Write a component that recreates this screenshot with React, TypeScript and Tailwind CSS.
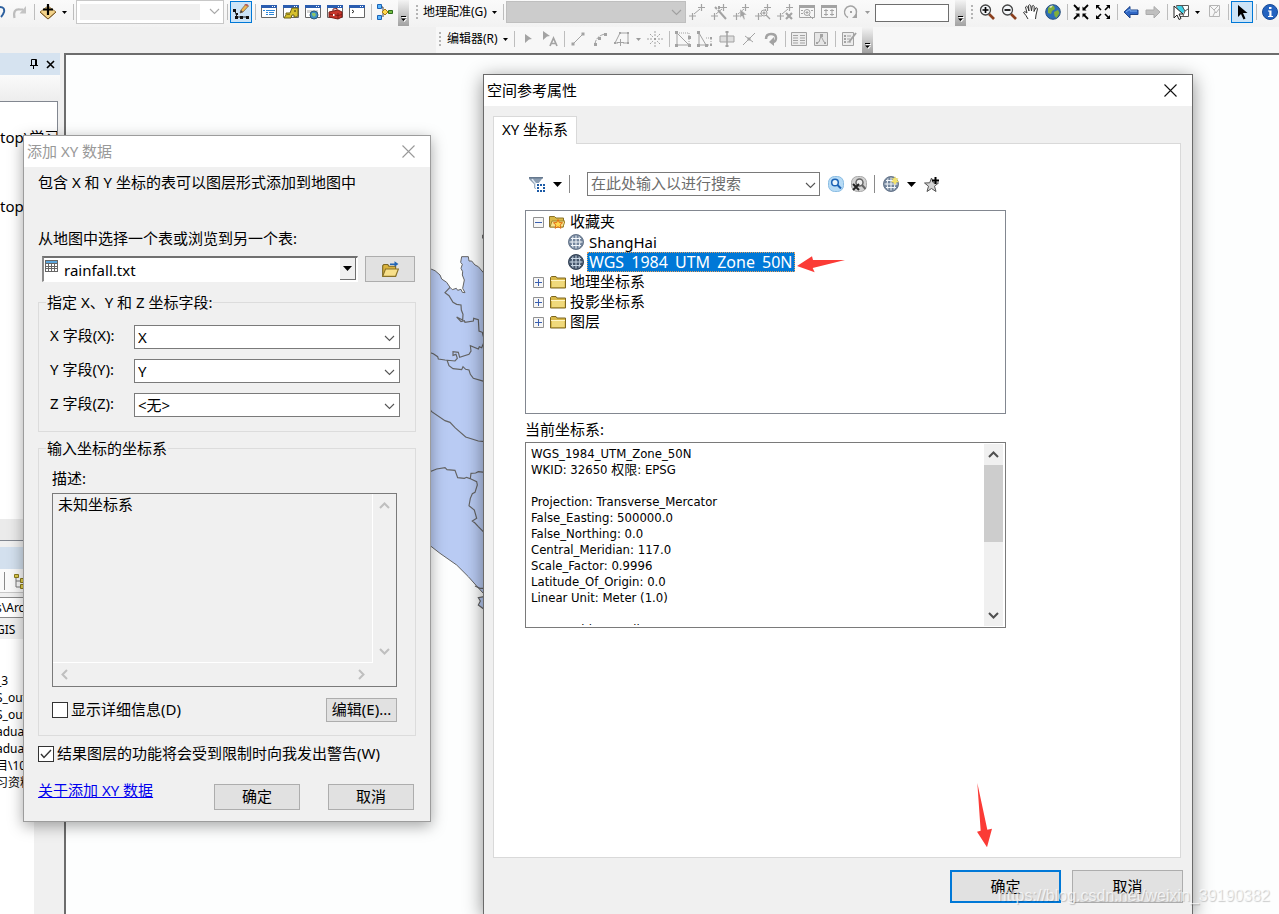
import React from "react";
import type { ReactNode } from "react";

/* ---------- small building blocks ---------- */

function Svg({ children, size = 16 }: { children: ReactNode; size?: number }) {
  return (
    <svg width={size} height={size} viewBox="0 0 16 16" fill="none" className="block shrink-0" aria-hidden="true">
      {children}
    </svg>
  );
}

function Tool({ label, active, children }: { label: string; active?: boolean; children: ReactNode }) {
  return (
    <button
      type="button"
      aria-label={label}
      className={
        active
          ? "mt-px flex h-[22px] w-[22px] shrink-0 items-center justify-center border border-[#0078d7] bg-[#cce4f7]"
          : "flex h-6 w-[22px] shrink-0 items-center justify-center"
      }
    >
      {children}
    </button>
  );
}

function Caret({ label, dim }: { label: string; dim?: boolean }) {
  return (
    <button type="button" aria-label={label} className="flex h-6 w-[11px] shrink-0 items-center justify-center">
      <svg width="5" height="3" viewBox="0 0 5 3" aria-hidden="true">
        <path d="M0 0h5L2.500 3z" fill={dim ? "#9a9a9a" : "#000"} />
      </svg>
    </button>
  );
}

function Sep() {
  return (
    <span className="flex h-6 w-1.5 shrink-0 items-center justify-center">
      <span className="h-4 w-px bg-[#bdbdbd]" />
    </span>
  );
}

function Grip() {
  return (
    <span className="flex h-6 w-2 shrink-0 items-center justify-center">
      <svg width="2" height="14" viewBox="0 0 2 14" fill="#b4b4b4" aria-hidden="true">
        <path d="M0 0h2v2H0zM0 4h2v2H0zM0 8h2v2H0zM0 12h2v2H0z" />
      </svg>
    </span>
  );
}

function Overflow() {
  return (
    <button
      type="button"
      aria-label="工具条选项"
      className="ml-0.5 flex h-[26px] w-[11px] shrink-0 items-end justify-center bg-linear-to-b from-[#f4f4f4] to-[#a2a2a2] pb-1"
    >
      <svg width="6" height="6" viewBox="0 0 6 6" aria-hidden="true">
        <path d="M1 1h5v1H1zM1 3h5L3.500 6z" fill="#fff" />
        <path d="M0 0h5v1H0zM0 2.500h5L2.500 5z" fill="#000" />
      </svg>
    </button>
  );
}

function Chevron({ color = "#555" }: { color?: string }) {
  return (
    <svg width="11" height="7" viewBox="0 0 11 7" fill="none" aria-hidden="true">
      <path d="M1 1l4.500 4.500L10 1" stroke={color} strokeWidth="1.100" />
    </svg>
  );
}

function ScrollArrow({ turn, color }: { turn: string; color: string }) {
  return (
    <svg width="11" height="11" viewBox="0 0 11 11" fill="none" className={turn} aria-hidden="true">
      <path d="M1 8l4.500-4.500L10 8" stroke={color} strokeWidth="2" />
    </svg>
  );
}

/* ---------- toolbar icons ---------- */

const G = "#a3a3a3";

const Redo = () => (
  <Svg>
    <path d="M2.500 14Q.5 4.500 8 5.500h3" stroke="#bdbdbd" strokeWidth="2.200" />
    <path d="M14 2v7.500H7.500z" fill="#c4c4c4" />
  </Svg>
);
const Undo = () => (
  <Svg>
    <path d="M5 3h5q5 0 4 5-1 3-3 5" stroke="#2c5f9e" strokeWidth="2" />
  </Svg>
);
const AddData = () => (
  <Svg>
    <path d="M8 2l8 6-8 7-8-7z" fill="#f3d38a" stroke="#9c7a3c" />
    <path d="M0 8l8 7 8-7" stroke="#7a5a2a" />
    <path d="M8 0v11M3 5.500h10" stroke="#000" strokeWidth="2.200" />
  </Svg>
);
const EditTool = () => (
  <Svg>
    <path d="M2 7l2 6h9" stroke="#222" />
    <path d="M0 5h3v3H0zM2 12h3v3H2zM7 12h3v3H7zM13 12h3v3h-3zM3 9h2v2H3z" fill="#111" />
    <path d="M7 9l1-3 5-6 2.500 2L10 8z" fill="#f0b64a" stroke="#8d7a64" />
    <path d="M7 9l1-3 2 2z" fill="#444" />
    <path d="M12 0l3 2" stroke="#b45f5f" strokeWidth="2" />
  </Svg>
);
function Win({ children }: { children?: ReactNode }) {
  return (
    <Svg>
      <path d="M.5 1.500h15v12H.5z" fill="#fff" stroke="#666" />
      <path d="M0 1h16v3H0z" fill="#2a5db0" />
      <path d="M11 2h1v1h-1zM13 2h1v1h-1z" fill="#fff" />
      {children}
    </Svg>
  );
}
const ContentsWin = () => (
  <Win>
    <path d="M2 6h2v1H2zM5 6h9v1H5zM5 8h2v1H5zM8 8h5v1H8zM5 10h2v1H5zM8 10h5v1H8z" fill="#2d86d8" />
  </Win>
);
const CatalogWin = () => (
  <Win>
    <path d="M9 4h6v8l-2 1h-2v-2H9l-1 3H1l2-3V9h4z" fill="#d6c02b" stroke="#6f6412" />
    <path d="M11 6h2v2h-2zM4 10h3v1H4z" fill="#8a7a18" />
  </Win>
);
const SearchWin = () => (
  <Win>
    <path d="M2 6h11v3H2z" fill="#d5d5d5" />
    <circle cx="9" cy="11" r="4" fill="#3b8fc6" stroke="#2c5c7a" />
    <path d="M7 9l3 0 1 2-2 2-2-2z" fill="#8dc56b" />
  </Win>
);
const ToolboxWin = () => (
  <Win>
    <path d="M2 8l9-2 4 2v5l-4 2-9-2z" fill="#c9362c" stroke="#7e1c16" />
    <path d="M6 7V5l4-.5V6M2 10l9 1.500 4-1M11 9v6" stroke="#7e1c16" />
    <path d="M6 10h1.500v2H6z" fill="#fff" />
  </Win>
);
const PythonWin = () => (
  <Win>
    <path d="M3 6l2 1.500L3 9" stroke="#222" />
  </Win>
);
const Model = () => (
  <Svg>
    <path d="M3 3h3v10M6 8h8" stroke="#444" />
    <path d="M.5.5h4v4h-4zM.5 11.500h4v4h-4z" fill="#5cb8ff" stroke="#1b62b5" />
    <path d="M8 5l3 3-3 3-3-3z" fill="#ffd84e" stroke="#a57a12" />
    <path d="M11.500 6.500h4v3h-4z" fill="#76c043" stroke="#2f6d1c" />
  </Svg>
);

const Link = ({ extra }: { extra?: ReactNode }) => (
  <Svg>
    <path d="M0 12h7M3.500 9v7M9 3.500h7M12.500 0v7" stroke={G} strokeWidth="1.200" />
    <path d="M5 10l6-5" stroke={G} />
    {extra}
  </Svg>
);
const WandMark = <path d="M7 6l8 9M8 2v3M4 3l2 2" stroke={G} strokeWidth="2" />;
const ArrowMark = <path d="M7 5v9l2-2 2 4 1-1-1-4h3z" fill={G} stroke="#f5f5f5" strokeWidth=".5" />;
const LensMark = (
  <>
    <circle cx="9" cy="9" r="3" fill="#f5f5f5" stroke={G} />
    <path d="M11 11l4 4M7.500 9h3M9 7.500v3" stroke={G} strokeWidth="1.300" />
  </>
);
const CrossMark = <path d="M9 9l6 6M15 9l-6 6" stroke={G} strokeWidth="2.200" />;

const FrameZoom = () => (
  <Svg>
    <path d="M.5 1.500h15v12H.5z" stroke={G} />
    <path d="M0 1h16v3H0zM2 6h2v1H2zM2 9h2v1H2zM12 6h2v1h-2z" fill={G} />
    <circle cx="8" cy="8.500" r="3" stroke={G} />
    <path d="M10 11l4 4M6.500 8.500h3M8 7v3" stroke={G} />
  </Svg>
);
const FrameTable = () => (
  <Svg>
    <path d="M.5 1.500h15v12H.5z" stroke={G} />
    <path d="M0 1h16v3H0z" fill={G} />
    <path d="M3 6.500h4M9 6.500h4M3 10.500h4M9 10.500h4M5 5v7M11 5v7" stroke={G} />
  </Svg>
);
const Rotate = () => (
  <Svg>
    <path d="M5 13.500A6 6 0 1 1 12 12" stroke={G} strokeWidth="1.500" />
    <path d="M9 14l5 0V9z" fill={G} />
    <path d="M7 7h2v2H7z" fill={G} />
  </Svg>
);

const ZoomLens = ({ plus }: { plus?: boolean }) => (
  <Svg>
    <path d="M10 10l5 5" stroke="#8a3f1d" strokeWidth="2.600" />
    <circle cx="6.500" cy="6" r="5" fill="#f4f7fa" stroke="#444" strokeWidth="1.300" />
    <path d={plus ? "M3.500 6h6M6.500 3v6" : "M3.500 6h6"} stroke="#000" strokeWidth="1.700" />
  </Svg>
);
const Hand = () => (
  <Svg>
    <path
      d="M5 15Q3 11 .5 8.500q1-2 3.500.5L2.500 3q1.200-1.500 2.200 0L6 7 5.500 1.500q1.200-1.500 2.200 0L8.500 7l.7-5q1.300-1.300 2 .2L11 7.500 12.700 4q1.500-.8 1.800.8L13 11l-.5 4"
      fill="#fff"
      stroke="#333"
    />
  </Svg>
);
const Earth = () => (
  <Svg>
    <circle cx="8" cy="8" r="7.300" fill="#2d6fb8" stroke="#28507c" />
    <path d="M3 4q3-3 6-2l1 3-3 2-1 3-3-1zM9 8l4-2 1.500 3-3 5-2-2z" fill="#7fae3c" />
    <path d="M4 3q2-2 4-1.500L6 4z" fill="#dfe9c4" />
  </Svg>
);
const FixedIn = () => (
  <Svg>
    <path d="M1 1l4 4M15 1l-4 4M1 15l4-4M15 15l-4-4" stroke="#000" strokeWidth="1.800" />
    <path d="M6.500 2.500v4h-4zM9.500 2.500v4h4zM6.500 13.500v-4h-4zM9.500 13.500v-4h4z" fill="#000" />
  </Svg>
);
const FixedOut = () => (
  <Svg>
    <path d="M2 2l4 4M14 2l-4 4M2 14l4-4M14 14l-4-4" stroke="#000" strokeWidth="1.600" />
    <path d="M1 1h4L1 5zM15 1h-4l4 4zM1 15h4l-4-4zM15 15h-4l4-4z" fill="#000" />
  </Svg>
);
const Back = () => (
  <Svg>
    <path d="M1 8l6-5.500V6h8v4.500H7V14z" fill="#2f66c4" stroke="#1f4488" />
    <path d="M3 8l4-3v2h7" stroke="#7fb0f0" />
  </Svg>
);
const Forward = () => (
  <Svg>
    <path d="M15 8L9 2.500V6H1v4.500h8V14z" fill="#c0c0c0" stroke="#acacac" />
  </Svg>
);
const SelectFeatures = () => (
  <Svg>
    <path d="M3.500 1.500h12v11h-9z" fill="#fff" stroke="#555" />
    <path d="M4 2h6l2 5-3 3-4-4z" fill="#3fd0e6" />
    <path d="M9 2l3 5 3-2M12 7l-2 5" stroke="#555" />
    <path d="M1 2v12l3-3 2 4.500 2-1L6 10h4z" fill="#fff" stroke="#222" />
  </Svg>
);
const ClearSelected = () => (
  <Svg>
    <path d="M3.500 1.500h10v11h-10z" stroke="#b5b5b5" />
    <path d="M4 2l4 4 2 3 3-4M8 6l4-4M9 8l-2 4" stroke="#b5b5b5" />
  </Svg>
);
const Pointer = () => (
  <Svg>
    <path d="M4 1v12l3-3 2.500 5.500 2-1L9 9h4.500z" fill="#000" />
  </Svg>
);
const Info = () => (
  <Svg>
    <circle cx="8" cy="8" r="7.500" fill="#2363c0" stroke="#174a96" />
    <path d="M7 3h2.500v2H7zM6 6.500h3.500V12H11v1H6v-1h1.300V7.500H6z" fill="#fff" />
  </Svg>
);

const EditIcons: Record<string, ReactNode> = {
  edit: <path d="M5 3l7 5-3 .5L5 12z" fill={G} />,
  note: (
    <>
      <path d="M1 0l7 5-3 .5L1 9z" fill={G} />
      <path d="M8 15l3.500-8L15 15M9.500 12.500h4" stroke={G} strokeWidth="1.700" />
    </>
  ),
  line: (
    <>
      <path d="M3 13L13 3" stroke={G} />
      <path d="M1.500 11.500h3v3h-3zM11.500 1.500h3v3h-3z" fill={G} />
    </>
  ),
  arc: (
    <>
      <path d="M3 13q1-8 10-10" stroke={G} strokeDasharray="4 1" />
      <path d="M2 12h3v3H2zM6 6h3v3H6zM12 2h3v3h-3z" fill={G} />
    </>
  ),
  trace: (
    <>
      <path d="M6 2h8v10H9M6 2L1 12h3M6.500 8v7M3 11.500h7" stroke={G} />
      <path d="M5 1h2v2H5zM13 1h2v2h-2zM13 11h2v2h-2zM0 11h2v2H0z" fill={G} />
    </>
  ),
  point: (
    <>
      <path d="M8 0v5M8 11v5M0 8h5M11 8h5M3 3l3 3M13 3l-3 3M3 13l3-3M13 13l-3-3" stroke={G} strokeDasharray="2 1" />
      <path d="M7 7h2v2H7z" fill={G} />
    </>
  ),
  vertices: (
    <>
      <path d="M2 2v12h12L2 2" stroke={G} />
      <path d="M2 2h12v12" stroke={G} strokeDasharray="1 1" />
      <path d="M0 0h3v3H0zM0 13h3v3H0zM13 13h3v3h-3zM13 5h3v3h-3z" fill={G} />
    </>
  ),
  reshape: (
    <>
      <path d="M2 2v12h7L2 2" stroke={G} />
      <path d="M9 7h5v7H9" stroke={G} strokeDasharray="1 1" />
      <path d="M0 0h3v3H0zM0 13h3v3H0zM8 13h3v3H8zM13 6h2v2h-2zM13 13h2v2h-2z" fill={G} />
    </>
  ),
  cut: (
    <>
      <path d="M1 5h14v6H1z" fill="#dedede" stroke={G} />
      <path d="M8 1v14" stroke={G} strokeWidth="1.500" />
      <path d="M6.500 0h3v2h-3zM6.500 14h3v2h-3z" fill={G} />
    </>
  ),
  split: (
    <>
      <path d="M2 14L14 2M4 5l8 6" stroke={G} />
      <path d="M6.500 6.500h3v3h-3z" fill={G} />
    </>
  ),
  spin: (
    <>
      <path d="M3 8q0-5 5-5t5 4-4 4" stroke={G} strokeWidth="2.500" />
      <path d="M11 6v9l-5-4z" fill={G} />
    </>
  ),
  attrs: (
    <>
      <path d="M.5 1.500h15v13H.5z" fill="#ededed" stroke={G} />
      <path d="M2 4.500h5M9 4.500h5M2 7h5M9 7h5M2 9.500h5M9 9.500h5M2 12h5M9 12h5" stroke={G} />
    </>
  ),
  sketch: (
    <>
      <path d="M1.500 1.500h13v13h-13z" fill="#e6e6e6" stroke={G} />
      <path d="M3 12l3-1 2-6 3 6 2 1" stroke={G} />
      <path d="M7 3h3v3H7zM3 11h2v2H3zM11 11h2v2h-2z" fill={G} />
    </>
  ),
  create: (
    <>
      <path d="M1.500 1.500h11v13h-11z" fill="#ededed" stroke={G} />
      <path d="M3 4h2v2H3zM3 7h2v2H3zM3 10h2v2H3zM6 4.500h4v1H6zM6 7.500h3v1H6zM6 10.500h4v1H6z" fill={G} />
      <path d="M8 11l7-9" stroke={G} strokeWidth="2" />
    </>
  ),
};

function EditButton({ name, label }: { name: string; label: string }) {
  return (
    <Tool label={label}>
      <Svg>{EditIcons[name]}</Svg>
    </Tool>
  );
}

/* ---------- dialog icons ---------- */

const Globe = ({ dark, spark }: { dark?: boolean; spark?: boolean }) => (
  <Svg>
    <circle cx="8" cy="8" r="7.500" fill={dark ? "#43546a" : "#73859c"} stroke={dark ? "#344356" : "#66768b"} />
    <path
      d="M8 1.500v13M5 2.500Q3 8 5 13.500M11 2.500q2 5.500 0 11M1.500 8h13M3 4.500h10M3 11.500h10"
      stroke={dark ? "#c9d6e4" : "#f3f7fb"}
    />
    {spark && <path d="M12 0l1 2.500 2.500-.5L14 4l2 2-2.500.5L12 9l-1.500-2.500L8 6l2-2-1.500-2 2.500.5z" fill="#f4e36c" />}
  </Svg>
);
const Folder = () => (
  <Svg>
    <path d="M.5 14V3.500l1-1H6l1 1.500h8.500v10z" fill="#d8b848" stroke="#7d6722" />
    <path d="M2 7h12.500v6H2z" fill="#f0d97c" />
    <path d="M1 6.500h14" stroke="#fff5c4" />
  </Svg>
);
const FavFolder = () => (
  <Svg>
    <path d="M.5 13V2.500h5L7 4h7.500v9z" fill="#d8b848" stroke="#8a7228" />
    <path d="M3 7h13l-2 6H1z" fill="#f6e28e" stroke="#a2842c" />
    <path d="M9 5.500l1.300 3 3.200.3-2.400 2.200.8 3.300L9 12.700l-2.900 1.600.8-3.300-2.400-2.200 3.200-.3z" fill="#ffd84e" stroke="#e06c14" />
  </Svg>
);
const OpenFolder = () => (
  <Svg size={18}>
    <path d="M1.500 14V5l1-1H6l1 1.500h6V14z" fill="#d9b23c" stroke="#7d6722" />
    <path d="M4 8h11.500L13 14.500H1.500z" fill="#f8e08a" stroke="#8a7228" />
    <path d="M8 4.500V3h4V1l3.500 2.500L12 6V4.500z" fill="#2165b5" />
  </Svg>
);
const TableIcon = () => (
  <svg width="13" height="12" viewBox="0 0 13 12" aria-hidden="true">
    <path d="M0 0h13v12H0z" fill="#666" />
    <path d="M1 1h11v2H1z" fill="#5aa5dc" />
    <path d="M1 4h2v2H1zM4 4h2v2H4zM7 4h2v2H7zM10 4h2v2h-2zM1 7h2v1H1zM4 7h2v1H4zM7 7h2v1H7zM10 7h2v1h-2zM1 9h2v2H1zM4 9h2v2H4zM7 9h2v2H7zM10 9h2v2h-2z" fill="#fff" />
  </svg>
);
const Funnel = () => (
  <Svg>
    <path d="M0 1.500h14L9 8v6l-4-2V8L0 3z" fill="#8b9db2" />
    <path d="M3 3l3.500 4.500V12" stroke="#dce6ef" strokeWidth="1.500" />
    <path d="M0 1h14v1.500H0z" fill="#65788e" />
    <path d="M7 7h9v9H7z" fill="#fff" />
    <path
      d="M8 8h2v2H8zM11 8h2v2h-2zM14 8h2v2h-2zM8 11h2v2H8zM14 11h2v2h-2zM8 14h2v2H8zM11 14h2v2h-2zM14 14h2v2h-2z"
      fill="#1c5aa6"
    />
  </Svg>
);
const FindIcon = () => (
  <Svg>
    <rect x=".5" y=".5" width="15" height="15" rx="6" fill="#b7dbf5" stroke="#8bbde3" />
    <circle cx="7" cy="6.500" r="3.300" fill="#e9f5fd" stroke="#1b62b5" strokeWidth="1.500" />
    <path d="M9.500 9l3.500 3.500" stroke="#1b62b5" strokeWidth="2" />
  </Svg>
);
const ClearFind = () => (
  <Svg>
    <rect x=".5" y=".5" width="15" height="15" rx="6" fill="#d2d2d2" stroke="#a8a8a8" />
    <circle cx="8.500" cy="6.500" r="3.500" fill="#eee" stroke="#666" strokeWidth="1.500" />
    <path d="M11 9l3.500 4" stroke="#666" strokeWidth="2" />
    <path d="M2 8l6 6M8 8l-6 6" stroke="#222" strokeWidth="2" />
  </Svg>
);
const StarAdd = () => (
  <Svg>
    <path d="M7.500 2l1.800 4.800 5.200.2-4 3.200 1.500 5.300-4.500-3-4.500 3 1.500-5.300-4-3.200 5.200-.2z" fill="#d4d4d4" stroke="#555" />
    <path d="M11.500 1v7M8 4.500h7" stroke="#000" strokeWidth="2" />
  </Svg>
);
const Close = ({ color }: { color: string }) => (
  <svg width="13" height="13" viewBox="0 0 13 13" fill="none" aria-hidden="true">
    <path d="M.5.5l12 12M12.500.5l-12 12" stroke={color} strokeWidth="1.100" />
  </svg>
);

/* ---------- application window ---------- */

function Toolbars() {
  return (
    <header className="shrink-0 bg-[#f0f0f0]">
      <div className="flex h-[27px] items-start overflow-hidden bg-linear-to-b from-[#fafafa] to-[#f2f2f2]">
        <div className="-ml-[13px] flex shrink-0 items-start">
          <Tool label="撤消"><Undo /></Tool>
          <Tool label="恢复"><Redo /></Tool>
          <Sep />
          <Tool label="添加数据"><AddData /></Tool>
          <Caret label="添加数据选项" />
          <Sep />
          <div className="relative h-6 w-[148px]">
            <select aria-label="地图比例" disabled className="h-full w-full appearance-none border border-[#c8c8c8] bg-white" />
            <span className="pointer-events-none absolute inset-y-1 left-1 right-6 bg-[#f0f0f0]" />
            <span className="pointer-events-none absolute right-1 top-2"><Chevron color="#a8a8a8" /></span>
          </div>
          <Sep />
          <Tool label="编辑器工具条" active><EditTool /></Tool>
          <Sep />
          <Tool label="内容列表"><ContentsWin /></Tool>
          <Tool label="目录"><CatalogWin /></Tool>
          <Tool label="搜索"><SearchWin /></Tool>
          <Tool label="工具箱"><ToolboxWin /></Tool>
          <Tool label="Python"><PythonWin /></Tool>
          <Sep />
          <Tool label="模型构建器"><Model /></Tool>
          <Overflow />
        </div>

        <div className="ml-1 flex shrink-0 items-start">
          <Grip />
          <button type="button" className="h-6 w-[68px] whitespace-nowrap pl-0.5 text-left text-[12px]">地理配准(G)</button>
          <Caret label="地理配准菜单" />
          <Sep />
          <div className="relative mt-px h-[22px] w-[180px]">
            <select aria-label="图层" disabled className="h-full w-full appearance-none border border-[#bfbfbf] bg-[#cccccc]" />
            <span className="pointer-events-none absolute right-1 top-2"><Chevron color="#a0a0a0" /></span>
          </div>
          <Tool label="添加控制点"><Link /></Tool>
          <Tool label="自动配准"><Link extra={WandMark} /></Tool>
          <Tool label="选择连接"><Link extra={ArrowMark} /></Tool>
          <Tool label="缩放至连接"><Link extra={LensMark} /></Tool>
          <Tool label="删除连接"><Link extra={CrossMark} /></Tool>
          <Tool label="查看器"><FrameZoom /></Tool>
          <Tool label="连接表"><FrameTable /></Tool>
          <Tool label="旋转"><Rotate /></Tool>
          <Caret label="旋转选项" dim />
          <input aria-label="角度" className="ml-0.5 mr-1 mt-1 h-[18px] w-[74px] border border-[#6e6e6e] bg-white px-1 text-[12px]" />
          <Overflow />
        </div>

        <div className="ml-0.5 flex shrink-0 items-start">
          <Grip />
          <Tool label="放大"><ZoomLens plus /></Tool>
          <Tool label="缩小"><ZoomLens /></Tool>
          <Tool label="平移"><Hand /></Tool>
          <Tool label="全图"><Earth /></Tool>
          <Sep />
          <Tool label="固定比例放大"><FixedIn /></Tool>
          <Tool label="固定比例缩小"><FixedOut /></Tool>
          <Sep />
          <Tool label="返回"><Back /></Tool>
          <Tool label="前进"><Forward /></Tool>
          <Sep />
          <Tool label="选择要素"><SelectFeatures /></Tool>
          <Caret label="选择选项" />
          <Tool label="清除所选"><ClearSelected /></Tool>
          <Sep />
          <Tool label="选择元素" active><Pointer /></Tool>
          <Sep />
          <Tool label="识别"><Info /></Tool>
        </div>
      </div>

      <div className="flex h-[26px] overflow-hidden pl-[436px]">
        <div className="flex flex-1 items-start bg-[#f7f7f7]">
          <Grip />
          <button type="button" className="h-6 w-14 whitespace-nowrap pl-[3px] text-left text-[12px]">编辑器(R)</button>
          <Caret label="编辑器菜单" />
          <Sep />
          <EditButton name="edit" label="编辑工具" />
          <EditButton name="note" label="编辑注记工具" />
          <Sep />
          <EditButton name="line" label="直线段" />
          <EditButton name="arc" label="弧段" />
          <EditButton name="trace" label="追踪" />
          <Caret label="追踪选项" dim />
          <EditButton name="point" label="点" />
          <Sep />
          <EditButton name="vertices" label="编辑折点" />
          <EditButton name="reshape" label="整形要素" />
          <EditButton name="cut" label="裁剪面" />
          <EditButton name="split" label="分割" />
          <EditButton name="spin" label="旋转工具" />
          <Sep />
          <EditButton name="attrs" label="属性" />
          <EditButton name="sketch" label="草图属性" />
          <Sep />
          <EditButton name="create" label="创建要素" />
          <Overflow />
        </div>
      </div>
    </header>
  );
}

const FILES = ["_3", "S_out", "S_out", "adual", "adual", "目\\10", "习资料"];

function SidePanels() {
  return (
    <aside className="flex w-16 shrink-0 flex-col overflow-hidden whitespace-nowrap bg-[#f0f0f0]">
      <div className="flex h-[22px] w-[60px] shrink-0 items-center justify-end gap-2 bg-[#d6e3f0] pr-[5px]">
        <button type="button" aria-label="自动隐藏">
          <svg width="8" height="10" viewBox="0 0 8 10" fill="none" aria-hidden="true">
            <path d="M1.500.5h5V6M1.500.5V6M5.500 1v5M0 6.500h8M3.500 7v3" stroke="#000" />
          </svg>
        </button>
        <button type="button" aria-label="关闭面板">
          <svg width="9" height="9" viewBox="0 0 9 9" fill="none" aria-hidden="true">
            <path d="M1 1l7 7M8 1l-7 7" stroke="#000" strokeWidth="1.600" />
          </svg>
        </button>
      </div>
      <div className="h-[26px] w-[60px] shrink-0 bg-linear-to-b from-[#fafafa] to-[#ededed]" />
      <div className="h-[418px] w-[58px] shrink-0 overflow-hidden border-r border-t border-[#828790] bg-white pt-[25px] text-[15px] leading-5">
        <div>top\学习</div>
        <div className="mt-[49px]">top\</div>
      </div>
      <div className="h-[21px] shrink-0 bg-[#ebebeb]" />
      <div className="h-[7px] shrink-0 border-t border-[#828790]" />
      <div className="h-[22px] shrink-0 bg-[#d3e0ee]" />
      <div className="flex h-[24px] shrink-0 items-center border-b border-[#c8c8c8] bg-[#fafafa] pl-1">
        <span className="h-[18px] w-px bg-[#8a8a8a]" />
        <span className="ml-2">
          <Svg>
            <path d="M3 4v10h5M3 8h5" stroke="#777" />
            <path d="M1.500 1.500h4v3h-4zM7.500 5.500h4v4h-4zM7.500 11.500h4v4h-4z" fill="#e2cf4d" stroke="#8a7a1e" />
          </Svg>
        </span>
      </div>
      <input
        aria-label="位置"
        defaultValue="s\ArcGIS"
        className="-ml-1 mt-1 h-[21px] w-[68px] shrink-0 border-y border-[#8a8a8a] bg-white pb-px text-[12px]"
      />
      <div className="-ml-1 mt-[3px] w-[21px] shrink-0 text-[12px] leading-[18px]">GIS</div>
      <ul className="w-[34px] flex-1 overflow-hidden bg-white pt-[33px] text-[12px] leading-[17px]">
        {FILES.map((f, i) => (
          <li key={i} className="-ml-1">{f}</li>
        ))}
      </ul>
    </aside>
  );
}

function MapView() {
  return (
    <main className="relative flex-1 overflow-hidden border-l-2 border-t-2 border-[#6d6d6d] bg-[#fdfefe]">
      <svg className="absolute left-[359px] top-[170px]" width="70" height="400" viewBox="0 0 210 1200" fill="none" aria-hidden="true">
        <path
          d="M0 122L20 133 30 137 45 150 50 162 65 172 75 187 82 194 94 190 98 196 108 193 112 202 120 203 113 190 118 165 112 150 113 140 108 130 112 118 107 112 110 95 130 95 132 108 140 108 150 120 160 125 177 145 210 170V1130L175 1105 155 1083 130 1055 95 1020 45 985 0 950z"
          fill="#b9cbf3"
          stroke="#646464"
          strokeWidth="3"
        />
        <path d="M177 1115L160 1118 166 1128 160 1140 177 1153 190 1153V1115z" fill="#b9cbf3" />
        <path
          d="M75 187L60 203 72 212 84 232 95 238 108 240 109 255 114 268 113 285 95 276 108 290 118 287 120 292 145 288 146 280 160 284 162 318 172 322 175 335M0 378L25 386 38 395 40 402 60 405 90 408 97 400 93 388 84 391 84 380 100 382 104 397 132 388 138 378 136 362 160 372 163 365 170 368 177 352M66 405L72 422 84 431 110 434 114 425 122 433 132 435 136 448 145 460 177 469M0 535L20 560 60 587 75 592 90 608 122 636 160 648 180 650M0 746L35 732 60 728 66 734 90 736 98 758 118 760 125 757 138 762 155 770 157 780 150 802 142 806 136 820 132 842 148 855 155 880 142 888 150 894 160 905 177 922M136 760L138 745 152 744 160 740 180 742M150 1083L165 1090 177 1090M177 1115L160 1118 166 1128 160 1140 177 1153M180 31h-7v8h7"
          stroke="#646464"
          strokeWidth="3.500"
        />
      </svg>
    </main>
  );
}

/* ---------- "添加 XY 数据" dialog ---------- */

const PUSH = "border border-[#adadad] bg-[#e1e1e1] text-center";

function FieldRow({ id, label, value }: { id: string; label: string; value: string }) {
  return (
    <div className="flex h-6 items-center">
      <label htmlFor={id} className="w-[84px] shrink-0 pb-1">{label}</label>
      <div className="relative h-6 flex-1">
        <select id={id} className="h-full w-full appearance-none border border-[#7a7a7a] bg-white pl-[3px] pr-6">
          <option>{value}</option>
        </select>
        <span className="pointer-events-none absolute right-[5px] top-2.5"><Chevron /></span>
      </div>
    </div>
  );
}

function AddXYDialog() {
  return (
    <section
      role="dialog"
      aria-labelledby="xy-title"
      className="absolute left-[23px] top-[135px] w-[408px] border border-[#9c9c9c] bg-[#f0f0f0] text-[15px] leading-5 shadow-[0_4px_14px_rgba(0,0,0,0.35)]"
    >
      <div className="flex h-[31px] items-center justify-between bg-white pl-[3px] pr-[15px] text-[#999]">
        <h2 id="xy-title" className="pb-0.5">添加 XY 数据</h2>
        <button type="button" aria-label="关闭"><Close color="#999" /></button>
      </div>

      <div className="px-3.5 pb-[11px] pt-[5px]">
        <p>包含 X 和 Y 坐标的表可以图层形式添加到地图中</p>
        <label htmlFor="table-source" className="mt-9 block">从地图中选择一个表或浏览到另一个表:</label>

        <div className="mt-2 flex items-center justify-between pl-1 pr-px">
          <div className="relative h-[26px] w-[316px]">
            <select
              id="table-source"
              className="h-full w-full appearance-none border-b border-l-2 border-r border-t-2 border-b-white border-l-[#8a8a8a] border-r-white border-t-[#707070] bg-white pl-5 pr-5"
            >
              <option>rainfall.txt</option>
            </select>
            <span className="pointer-events-none absolute left-[3px] top-1"><TableIcon /></span>
            <span className="pointer-events-none absolute bottom-0.5 right-0.5 top-0.5 flex w-4 items-center justify-center border-b border-r border-[#707070] bg-[#f0f0f0]">
              <svg width="9" height="5" viewBox="0 0 9 5" aria-hidden="true"><path d="M0 0h9L4.500 5z" /></svg>
            </span>
          </div>
          <button type="button" aria-label="浏览" className={`${PUSH} flex h-[26px] w-[50px] items-center justify-center`}>
            <OpenFolder />
          </button>
        </div>

        <fieldset className="mt-2.5 border border-[#dcdcdc] px-[11px] pb-3.5 pr-[15px]">
          <legend className="-ml-1 px-px">指定 X、Y 和 Z 坐标字段:</legend>
          <div className="mt-[13px] flex flex-col gap-2.5">
            <FieldRow id="fx" label="X 字段(X):" value="X" />
            <FieldRow id="fy" label="Y 字段(Y):" value="Y" />
            <FieldRow id="fz" label="Z 字段(Z):" value="<无>" />
          </div>
        </fieldset>

        <fieldset className="mt-1.5 border border-[#dcdcdc] px-[13px] pb-[13px] pr-[18px]">
          <legend className="-ml-1.5 px-px">输入坐标的坐标系</legend>
          <label htmlFor="desc" className="mt-2.5 block">描述:</label>
          <div className="mt-[5px] grid h-[194px] grid-cols-[1fr_23px] grid-rows-[1fr_23px] border border-[#7a7a7a]">
            <textarea
              id="desc"
              readOnly
              defaultValue="未知坐标系"
              className="resize-none overflow-hidden border-b border-r border-white bg-transparent px-[5px]"
            />
            <div className="flex flex-col items-center justify-between py-1.5">
              <button type="button" aria-label="向上滚动"><ScrollArrow turn="" color="#bfbfbf" /></button>
              <button type="button" aria-label="向下滚动"><ScrollArrow turn="rotate-180" color="#bfbfbf" /></button>
            </div>
            <div className="flex items-center justify-between px-1.5">
              <button type="button" aria-label="向左滚动"><ScrollArrow turn="-rotate-90" color="#bfbfbf" /></button>
              <button type="button" aria-label="向右滚动"><ScrollArrow turn="rotate-90" color="#bfbfbf" /></button>
            </div>
          </div>
          <div className="mt-[11px] flex items-center justify-between">
            <label className="flex items-center gap-[3px]">
              <input type="checkbox" className="h-4 w-4 appearance-none border border-[#333] bg-white" />
              <span className="pb-0.5">显示详细信息(D)</span>
            </label>
            <button type="button" className={`${PUSH} h-6 w-[71px] pb-0.5`}>编辑(E)...</button>
          </div>
        </fieldset>

        <label className="relative mt-[7px] flex items-center gap-[3px]">
          <input type="checkbox" defaultChecked className="h-4 w-4 appearance-none border border-[#333] bg-white" />
          <svg className="pointer-events-none absolute left-0.5 top-[5px]" width="12" height="12" viewBox="0 0 12 12" fill="none" aria-hidden="true">
            <path d="M1 6l3 3.500L11 2" stroke="#333" strokeWidth="1.400" />
          </svg>
          <span className="pb-0.5">结果图层的功能将会受到限制时向我发出警告(W)</span>
        </label>

        <div className="mt-[19px] flex items-start justify-between pr-0.5">
          <a href="#about" className="-mt-1 text-[#0000ee] underline">关于添加 XY 数据</a>
          <div className="flex gap-7">
            <button type="button" className={`${PUSH} h-[26px] w-[86px] pb-0.5`}>确定</button>
            <button type="button" className={`${PUSH} h-[26px] w-[86px] pb-0.5`}>取消</button>
          </div>
        </div>
      </div>
    </section>
  );
}

/* ---------- "空间参考属性" dialog ---------- */

const DESCRIPTION = `WGS_1984_UTM_Zone_50N
WKID: 32650 权限: EPSG

Projection: Transverse_Mercator
False_Easting: 500000.0
False_Northing: 0.0
Central_Meridian: 117.0
Scale_Factor: 0.9996
Latitude_Of_Origin: 0.0
Linear Unit: Meter (1.0)

Geographic Coordinate System: GCS_WGS_1984`;

function Expander({ open }: { open?: boolean }) {
  return (
    <button type="button" aria-label={open ? "折叠" : "展开"} className="shrink-0">
      <svg width="11" height="11" viewBox="0 0 11 11" fill="none" aria-hidden="true">
        <path d="M.5.5h10v10H.5z" fill="#f6f6f6" stroke="#919191" />
        <path d={open ? "M2 5.500h7" : "M2 5.500h7M5.500 2v7"} stroke="#3a5fb0" />
      </svg>
    </button>
  );
}

function FolderRow({ name }: { name: string }) {
  return (
    <li className="flex h-5 items-center">
      <Expander />
      <span className="ml-1.5 mr-1"><Folder /></span>
      <span className="pb-0.5">{name}</span>
    </li>
  );
}

function BlackCaret({ label }: { label: string }) {
  return (
    <button type="button" aria-label={label}>
      <svg width="9" height="5" viewBox="0 0 9 5" aria-hidden="true"><path d="M0 0h9L4.500 5z" /></svg>
    </button>
  );
}

function SpatialDialog() {
  return (
    <section
      role="dialog"
      aria-labelledby="sr-title"
      className="absolute bottom-0 left-[483px] top-[74px] flex w-[710px] flex-col border border-b-0 border-[#6a6a6a] bg-[#f0f0f0] text-[15px] leading-5 shadow-[0_4px_18px_rgba(0,0,0,0.45)]"
    >
      <div className="flex h-[31px] shrink-0 items-center justify-between bg-white pl-[3px] pr-[15px]">
        <h2 id="sr-title" className="pb-0.5">空间参考属性</h2>
        <button type="button" aria-label="关闭"><Close color="#111" /></button>
      </div>

      <div className="flex flex-1 flex-col px-[9px] pr-[11px] pt-2.5">
        <div role="tablist" className="z-10 -mb-px flex">
          <button type="button" role="tab" aria-selected="true" className="h-7 w-[84px] border border-b-0 border-[#d9d9d9] bg-white pb-[3px]">
            XY 坐标系
          </button>
        </div>

        <div role="tabpanel" className="min-h-0 flex-1 border border-[#d9d9d9] bg-white px-[31px] pt-7">
          <div className="flex h-6 items-center pl-1">
            <button type="button" aria-label="过滤" className="mr-2"><Funnel /></button>
            <BlackCaret label="过滤选项" />
            <span className="ml-[7px] mr-[17px] h-[18px] w-px bg-[#8a8a8a]" />
            <div className="relative h-6 w-[233px]">
              <input
                aria-label="搜索"
                placeholder="在此处输入以进行搜索"
                className="h-full w-full border border-[#7a7a7a] bg-white pb-[3px] pl-[3px] pr-6 placeholder:text-[#6d6d6d]"
              />
              <span className="pointer-events-none absolute right-1 top-2.5"><Chevron /></span>
            </div>
            <button type="button" aria-label="查找" className="ml-2"><FindIcon /></button>
            <button type="button" aria-label="清除" className="ml-[7px]"><ClearFind /></button>
            <span className="mx-[7px] h-[18px] w-px bg-[#8a8a8a]" />
            <button type="button" aria-label="新建坐标系" className="ml-px mr-2"><Globe spark /></button>
            <BlackCaret label="新建选项" />
            <button type="button" aria-label="添加到收藏夹" className="ml-2"><StarAdd /></button>
          </div>

          <ul className="mt-[14px] h-[204px] w-[481px] border border-[#828790] pl-[7px] pt-px">
            <li>
              <div className="flex h-5 items-center">
                <Expander open />
                <span className="ml-[5px] mr-[5px]"><FavFolder /></span>
                <span className="pb-0.5">收藏夹</span>
              </div>
              <ul className="pl-[35px]">
                <li className="flex h-5 items-center">
                  <Globe />
                  <span className="ml-[5px] pb-px">ShangHai</span>
                </li>
                <li className="flex h-5 items-center">
                  <Globe dark />
                  <span className="ml-[3px] h-5 overflow-hidden border border-dotted border-[#e8a05c] bg-[#0078d7] px-px text-white">
                    <span className="block h-4 overflow-hidden text-base leading-[18px]">WGS_1984_UTM_Zone_50N</span>
                  </span>
                  <span className="relative h-5 w-0">
                    <svg className="absolute left-0.5 top-1" width="48" height="17" viewBox="0 0 144 51" aria-hidden="true">
                      <path d="M0 30L45 1 48 12H144L47 36 53 49z" fill="#fb3b36" />
                    </svg>
                  </span>
                </li>
              </ul>
            </li>
            <FolderRow name="地理坐标系" />
            <FolderRow name="投影坐标系" />
            <FolderRow name="图层" />
          </ul>

          <label htmlFor="current" className="mt-[5px] block h-[23px]">当前坐标系:</label>
          <div className="flex h-[186px] w-[481px] border border-[#7a7a7a] bg-white pb-px">
            <textarea
              id="current"
              readOnly
              defaultValue={DESCRIPTION}
              className="mb-px min-w-0 flex-1 resize-none overflow-hidden bg-white pl-[5px] pt-[3px] font-['DejaVu_Sans_Condensed','DejaVu_Sans','Noto_Sans_CJK_SC',sans-serif] text-[13px] leading-4"
            />
            <div className="mr-0.5 mt-px flex w-[19px] flex-col items-center bg-[#f0f0f0]">
              <button type="button" aria-label="向上滚动" className="flex h-[21px] items-center"><ScrollArrow turn="" color="#505050" /></button>
              <span className="h-[77px] w-full bg-[#cdcdcd]" />
              <button type="button" aria-label="向下滚动" className="mt-auto flex h-[21px] items-center"><ScrollArrow turn="rotate-180" color="#505050" /></button>
            </div>
          </div>
        </div>

        <div className="-mr-0.5 flex h-14 shrink-0 items-start justify-end gap-[11px] pt-3">
          <div className="relative">
            <button type="button" className="h-[33px] w-[111px] border-2 border-[#0078d7] bg-[#e1e1e1] pb-0.5">确定</button>
            <svg className="absolute -top-[87px] left-[27px]" width="16" height="65" viewBox="0 0 48 195" aria-hidden="true">
              <path d="M1 0L31 140 45 137 30 193 0 146 11 143z" fill="#fb3b36" />
            </svg>
          </div>
          <button type="button" className={`${PUSH} h-[33px] w-[111px] pb-0.5`}>取消</button>
        </div>
      </div>
    </section>
  );
}

export default function App() {
  return (
    <div className="relative flex h-screen flex-col overflow-hidden bg-[#f0f0f0] font-['Noto_Sans','Noto_Sans_CJK_SC',sans-serif] text-black">
      <Toolbars />
      <div className="flex min-h-0 flex-1">
        <SidePanels />
        <MapView />
      </div>
      <AddXYDialog />
      <SpatialDialog />
      <p className="pointer-events-none absolute bottom-2 right-[9px] font-['Liberation_Sans',sans-serif] text-[16px] leading-5 text-white/70 [text-shadow:1px_1px_1px_rgba(0,0,0,0.2)]">
        https://blog.csdn.net/weixin_39190382
      </p>
    </div>
  );
}
